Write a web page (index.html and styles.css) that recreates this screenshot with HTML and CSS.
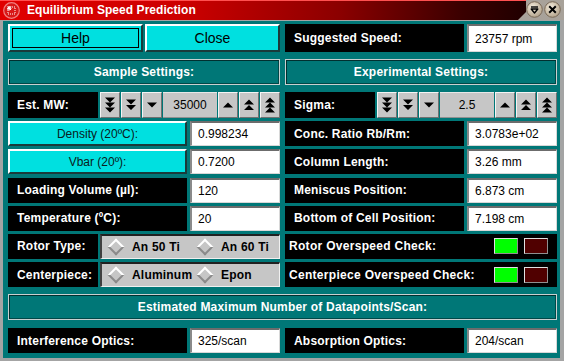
FILE: index.html
```html
<!DOCTYPE html>
<html>
<head>
<meta charset="utf-8">
<link rel="stylesheet" href="styles.css">
</head>
<body>
<div class="win">
  <div class="titlebar">
    <div class="tb-red">
      <svg class="appicon" width="17" height="17" viewBox="0 0 17 17">
        <circle cx="8.5" cy="8.5" r="7.8" fill="#d81818" stroke="#f08080" stroke-width="1.2"/>
        <rect x="5" y="5" width="7" height="7" fill="none" stroke="#fff" stroke-width="1" stroke-dasharray="1 1"/>
        <path d="M4.5 4.5 L8 8 M8 4.5 L4.5 8 M6.25 4 V8.5 M4 6.25 H8.5" stroke="#fff" stroke-width="1"/>
      </svg>
      <span class="title">Equilibrium Speed Prediction</span>
    </div>
    <div class="tb-btns">
      <svg width="17" height="17" viewBox="0 0 17 17">
        <defs><radialGradient id="g1" cx="0.4" cy="0.35" r="0.7"><stop offset="0" stop-color="#f4ecdc"/><stop offset="1" stop-color="#b0a088"/></radialGradient></defs>
        <circle cx="8.5" cy="8.5" r="7.8" fill="url(#g1)" stroke="#7a6a58" stroke-width="1"/>
        <path d="M5 6 H12" stroke="#000" stroke-width="1.4"/>
        <path d="M5.2 8 H11.8 L8.5 12 Z" fill="none" stroke="#000" stroke-width="1.4" stroke-linejoin="round"/>
      </svg>
      <svg width="17" height="17" viewBox="0 0 17 17">
        <circle cx="8.5" cy="8.5" r="7.8" fill="url(#g1)" stroke="#7a6a58" stroke-width="1"/>
        <path d="M5.2 5.2 L11.8 11.8 M11.8 5.2 L5.2 11.8" stroke="#000" stroke-width="2"/>
      </svg>
    </div>
  </div>
  <div class="content">
    <div class="two top">
      <div class="btnpair">
        <div class="cbtn focus"><span>Help</span></div>
        <div class="cbtn"><span>Close</span></div>
      </div>
      <div class="pair">
        <div class="lbl">Suggested Speed:</div>
        <div class="val">23757 rpm</div>
      </div>
    </div>

    <div class="two heads">
      <div class="hdr">Sample Settings:</div>
      <div class="hdr">Experimental Settings:</div>
    </div>

    <div class="two main">
      <div class="col">
        <div class="row spinrow">
          <div class="lbl">Est. MW:</div>
          <div class="spin">
            <div class="sb"><svg width="12" height="16" viewBox="0 0 12 16"><path d="M1 0.5 H11 L6 5.5 Z M1 5.5 H11 L6 10.5 Z M1 10.5 H11 L6 15.5 Z" fill="#000"/></svg></div>
            <div class="sb"><svg width="12" height="12" viewBox="0 0 12 12"><path d="M1 0.5 H11 L6 5.5 Z M1 6 H11 L6 11 Z" fill="#000"/></svg></div>
            <div class="sb"><svg width="12" height="6" viewBox="0 0 12 6"><path d="M1 0.5 H11 L6 5.5 Z" fill="#000"/></svg></div>
            <div class="sv">35000</div>
            <div class="sb"><svg width="12" height="6" viewBox="0 0 12 6"><path d="M1 5.5 H11 L6 0.5 Z" fill="#000"/></svg></div>
            <div class="sb"><svg width="12" height="12" viewBox="0 0 12 12"><path d="M1 5.5 H11 L6 0.5 Z M1 11 H11 L6 6 Z" fill="#000"/></svg></div>
            <div class="sb"><svg width="12" height="16" viewBox="0 0 12 16"><path d="M1 5.5 H11 L6 0.5 Z M1 10.5 H11 L6 5.5 Z M1 15.5 H11 L6 10.5 Z" fill="#000"/></svg></div>
          </div>
        </div>
        <div class="row pair">
          <div class="cbtn small"><span>Density (20ºC):</span></div>
          <div class="val">0.998234</div>
        </div>
        <div class="row pair">
          <div class="cbtn small"><span>Vbar (20º):</span></div>
          <div class="val">0.7200</div>
        </div>
        <div class="row pair">
          <div class="lbl">Loading Volume (µl):</div>
          <div class="val">120</div>
        </div>
        <div class="row pair">
          <div class="lbl">Temperature (ºC):</div>
          <div class="val">20</div>
        </div>
        <div class="row radrow">
          <div class="lbl">Rotor Type:</div>
          <div class="radios">
            <div class="radio"><span class="dia"></span>An 50 Ti</div>
            <div class="radio"><span class="dia"></span>An 60 Ti</div>
          </div>
        </div>
        <div class="row radrow">
          <div class="lbl">Centerpiece:</div>
          <div class="radios">
            <div class="radio"><span class="dia"></span>Aluminum</div>
            <div class="radio"><span class="dia"></span>Epon</div>
          </div>
        </div>
      </div>

      <div class="col">
        <div class="row spinrow">
          <div class="lbl">Sigma:</div>
          <div class="spin">
            <div class="sb"><svg width="12" height="16" viewBox="0 0 12 16"><path d="M1 0.5 H11 L6 5.5 Z M1 5.5 H11 L6 10.5 Z M1 10.5 H11 L6 15.5 Z" fill="#000"/></svg></div>
            <div class="sb"><svg width="12" height="12" viewBox="0 0 12 12"><path d="M1 0.5 H11 L6 5.5 Z M1 6 H11 L6 11 Z" fill="#000"/></svg></div>
            <div class="sb"><svg width="12" height="6" viewBox="0 0 12 6"><path d="M1 0.5 H11 L6 5.5 Z" fill="#000"/></svg></div>
            <div class="sv">2.5</div>
            <div class="sb"><svg width="12" height="6" viewBox="0 0 12 6"><path d="M1 5.5 H11 L6 0.5 Z" fill="#000"/></svg></div>
            <div class="sb"><svg width="12" height="12" viewBox="0 0 12 12"><path d="M1 5.5 H11 L6 0.5 Z M1 11 H11 L6 6 Z" fill="#000"/></svg></div>
            <div class="sb"><svg width="12" height="16" viewBox="0 0 12 16"><path d="M1 5.5 H11 L6 0.5 Z M1 10.5 H11 L6 5.5 Z M1 15.5 H11 L6 10.5 Z" fill="#000"/></svg></div>
          </div>
        </div>
        <div class="row pair">
          <div class="lbl">Conc. Ratio Rb/Rm:</div>
          <div class="val">3.0783e+02</div>
        </div>
        <div class="row pair">
          <div class="lbl">Column Length:</div>
          <div class="val">3.26 mm</div>
        </div>
        <div class="row pair">
          <div class="lbl">Meniscus Position:</div>
          <div class="val">6.873 cm</div>
        </div>
        <div class="row pair">
          <div class="lbl">Bottom of Cell Position:</div>
          <div class="val">7.198 cm</div>
        </div>
        <div class="row check">
          <span class="ctext">Rotor Overspeed Check:</span>
          <span class="led green"></span>
          <span class="led red"></span>
        </div>
        <div class="row check">
          <span class="ctext">Centerpiece Overspeed Check:</span>
          <span class="led green"></span>
          <span class="led red"></span>
        </div>
      </div>
    </div>

    <div class="hdr wide">Estimated Maximum Number of Datapoints/Scan:</div>

    <div class="two bottom">
      <div class="pair">
        <div class="lbl">Interference Optics:</div>
        <div class="val">325/scan</div>
      </div>
      <div class="pair">
        <div class="lbl">Absorption Optics:</div>
        <div class="val">204/scan</div>
      </div>
    </div>
  </div>
</div>
</body>
</html>
```

FILE: styles.css
```css
html, body {
  margin: 0;
  padding: 0;
}
body {
  width: 564px;
  height: 361px;
  overflow: hidden;
  font-family: "Liberation Sans", Arial, sans-serif;
  font-size: 12px;
}
.win {
  width: 564px;
  height: 361px;
  background: #a4a4a4;
  display: flex;
  flex-direction: column;
}
.titlebar {
  height: 20px;
  display: flex;
  flex: none;
  background: #a8a29a;
}
.tb-red {
  width: 526px;
  height: 20px;
  display: flex;
  align-items: center;
  background: linear-gradient(to right, #e00000 0%, #cc0000 35%, #8a0000 65%, #3a0000 88%, #200000 100%);
  clip-path: polygon(0 0, 100% 0, 100% 12px, 518px 20px, 0 20px);
  box-shadow: inset 0 1px 0 #ff5050;
}
.appicon {
  margin-left: 3px;
  flex: none;
}
.title {
  margin-left: 7px;
  color: #fff;
  font-weight: bold;
  font-size: 12px;
  letter-spacing: 0.05px;
}
.tb-btns {
  display: flex;
  gap: 1px;
  padding-top: 1px;
}
.content {
  flex: 1;
  margin: 1px 4px 3px 3px;
  background: #007777;
  padding: 3px 3px 0 5px;
}
.two {
  display: grid;
  grid-template-columns: 272px 272px;
  column-gap: 5px;
}
.top {
  height: 28px;
}
.btnpair {
  display: grid;
  grid-template-columns: 135px 135px;
  column-gap: 2px;
}
.pair {
  display: grid;
  grid-template-columns: 179px 90px;
  column-gap: 3px;
}
.cbtn {
  background: #00e0e0;
  border-top: 2px solid #ffffff;
  border-left: 2px solid #ffffff;
  border-bottom: 2px solid #1a3a3a;
  border-right: 2px solid #1a3a3a;
  display: flex;
  align-items: center;
  justify-content: center;
  font-size: 14px;
  color: #000;
  box-sizing: border-box;
  position: relative;
}
.cbtn.focus::after {
  content: "";
  position: absolute;
  left: 2px;
  top: 2px;
  right: 2px;
  bottom: 2px;
  border: 1px solid #000;
}
.cbtn.small {
  font-size: 12px;
  color: #0a2020;
}
.lbl {
  background: #000;
  color: #fff;
  font-weight: bold;
  display: flex;
  align-items: center;
  padding-left: 9px;
  letter-spacing: 0.2px;
}
.val {
  background: #fff;
  border-top: 2px solid #6c6c6c;
  border-left: 2px solid #8a8a8a;
  border-bottom: 1px solid #d8d8d8;
  border-right: 1px solid #d8d8d8;
  display: flex;
  align-items: center;
  padding-left: 6px;
  color: #000;
  box-sizing: border-box;
}
.heads {
  margin-top: 7px;
}
.hdr {
  height: 26px;
  box-sizing: border-box;
  border: 1px solid #c8d0d0;
  box-shadow: inset 1px 1px 0 #003030, inset -1px -1px 0 #004848;
  color: #fff;
  font-weight: bold;
  display: flex;
  align-items: center;
  justify-content: center;
  letter-spacing: 0.2px;
}
.main {
  margin-top: 7px;
}
.col {
  display: flex;
  flex-direction: column;
  gap: 3.2px;
}
.row {
  height: 25px;
  box-sizing: border-box;
  flex: none;
}
.row.pair {
  display: grid;
}
.spinrow,
.radrow {
  display: grid;
  grid-template-columns: 90px 180px;
  column-gap: 2px;
}
.spinrow {
  height: 26px;
}
.spin {
  display: grid;
  grid-template-columns: 20px 20px 20px 54px 20px 20px 20px;
  column-gap: 1px;
}
.sb {
  background: #c6c6c6;
  border-top: 1px solid #f4f4f4;
  border-left: 1px solid #f4f4f4;
  border-bottom: 1px solid #707070;
  border-right: 1px solid #707070;
  display: flex;
  align-items: center;
  justify-content: center;
  box-sizing: border-box;
}
.sv {
  background: #c6c6c6;
  border-top: 1px solid #e8e8e8;
  border-bottom: 1px solid #909090;
  display: flex;
  align-items: center;
  justify-content: center;
  color: #000;
  font-size: 12px;
  box-sizing: border-box;
}
.radios {
  background: #c6c6c6;
  border-top: 2px solid #202020;
  border-left: 2px solid #404040;
  border-bottom: 1px solid #f0f0f0;
  border-right: 1px solid #f0f0f0;
  box-sizing: border-box;
  display: grid;
  grid-template-columns: 89px 1fr;
  align-items: center;
}
.radio {
  display: flex;
  align-items: center;
  font-weight: bold;
  color: #000;
  padding-left: 8px;
  letter-spacing: 0.2px;
}
.dia {
  width: 8px;
  height: 8px;
  transform: rotate(45deg);
  background: #c6c6c6;
  border-top: 2px solid #ffffff;
  border-left: 2px solid #ffffff;
  border-bottom: 2px solid #8a8a8a;
  border-right: 2px solid #8a8a8a;
  margin-right: 10px;
  flex: none;
}
.check {
  background: #000;
  display: flex;
  align-items: center;
  padding-left: 4px;
  color: #fff;
  font-weight: bold;
  letter-spacing: 0.3px;
}
.ctext {
  flex: 1;
}
.led {
  width: 24px;
  height: 16px;
  box-sizing: border-box;
  border-top: 1px solid #e0e0e0;
  border-left: 1px solid #e0e0e0;
  border-bottom: 1px solid #909090;
  border-right: 1px solid #909090;
}
.led.green {
  background: #00ff00;
  margin-right: 6px;
}
.led.red {
  background: #500000;
  margin-right: 9px;
}
.hdr.wide {
  margin-top: 7px;
  width: 549px;
}
.bottom {
  margin-top: 8px;
  height: 25px;
}
```
